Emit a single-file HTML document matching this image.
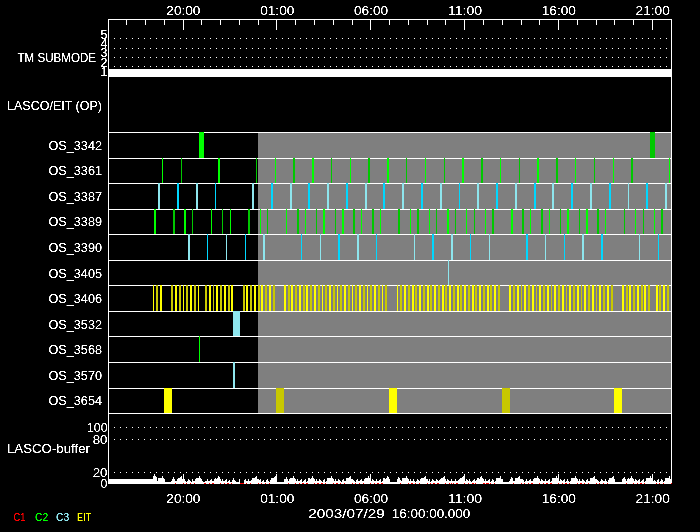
<!DOCTYPE html>
<html><head><meta charset="utf-8"><title>LASCO/EIT plan</title>
<style>html,body{margin:0;padding:0;background:#000;overflow:hidden}svg{display:block}text{font-family:"Liberation Sans",sans-serif}</style></head>
<body><svg width="700" height="532" viewBox="0 0 700 532">
<rect width="700" height="532" fill="#000"/>
<defs><filter id="tf" filterUnits="userSpaceOnUse" x="0" y="0" width="700" height="532" color-interpolation-filters="sRGB"><feComponentTransfer><feFuncA type="linear" slope="2.6" intercept="-0.6"/></feComponentTransfer></filter></defs>
<g shape-rendering="crispEdges">
<rect x="258" y="133" width="413" height="280" fill="#7f7f7f"/>
<rect x="108" y="132" width="564" height="1" fill="#fff"/>
<rect x="108" y="158" width="564" height="1" fill="#fff"/>
<rect x="108" y="183" width="564" height="1" fill="#fff"/>
<rect x="108" y="209" width="564" height="1" fill="#fff"/>
<rect x="108" y="234" width="564" height="1" fill="#fff"/>
<rect x="108" y="260" width="564" height="1" fill="#fff"/>
<rect x="108" y="285" width="564" height="1" fill="#fff"/>
<rect x="108" y="311" width="564" height="1" fill="#fff"/>
<rect x="108" y="336" width="564" height="1" fill="#fff"/>
<rect x="108" y="362" width="564" height="1" fill="#fff"/>
<rect x="108" y="388" width="564" height="1" fill="#fff"/>
<rect x="108" y="413" width="564" height="1" fill="#fff"/>
<rect x="199" y="132" width="5" height="26" fill="#00ff00"/>
<rect x="650" y="132" width="5" height="26" fill="#00c800"/>
<rect x="162" y="158" width="1" height="25" fill="#00ff00"/>
<rect x="181" y="158" width="1" height="25" fill="#00c800"/>
<rect x="218" y="158" width="2" height="25" fill="#00ff00"/>
<rect x="256" y="158" width="1" height="25" fill="#00c800"/>
<rect x="275" y="158" width="1" height="25" fill="#00ff00"/>
<rect x="293" y="158" width="2" height="25" fill="#00c800"/>
<rect x="312" y="158" width="2" height="25" fill="#00ff00"/>
<rect x="331" y="158" width="1" height="25" fill="#00c800"/>
<rect x="350" y="158" width="1" height="25" fill="#00ff00"/>
<rect x="368" y="158" width="2" height="25" fill="#00c800"/>
<rect x="387" y="158" width="2" height="25" fill="#00ff00"/>
<rect x="406" y="158" width="1" height="25" fill="#00c800"/>
<rect x="425" y="158" width="1" height="25" fill="#00ff00"/>
<rect x="444" y="158" width="1" height="25" fill="#00c800"/>
<rect x="462" y="158" width="2" height="25" fill="#00ff00"/>
<rect x="481" y="158" width="2" height="25" fill="#00c800"/>
<rect x="500" y="158" width="1" height="25" fill="#00ff00"/>
<rect x="519" y="158" width="1" height="25" fill="#00c800"/>
<rect x="537" y="158" width="2" height="25" fill="#00ff00"/>
<rect x="556" y="158" width="2" height="25" fill="#00c800"/>
<rect x="575" y="158" width="1" height="25" fill="#00ff00"/>
<rect x="594" y="158" width="1" height="25" fill="#00c800"/>
<rect x="613" y="158" width="1" height="25" fill="#00ff00"/>
<rect x="631" y="158" width="2" height="25" fill="#00c800"/>
<rect x="669" y="158" width="1" height="25" fill="#00ff00"/>
<rect x="158" y="183" width="2" height="26" fill="#8ee6ee"/>
<rect x="177" y="183" width="2" height="26" fill="#00d8ff"/>
<rect x="196" y="183" width="2" height="26" fill="#8ee6ee"/>
<rect x="215" y="183" width="1" height="26" fill="#00d8ff"/>
<rect x="252" y="183" width="2" height="26" fill="#8ee6ee"/>
<rect x="271" y="183" width="2" height="26" fill="#00d8ff"/>
<rect x="290" y="183" width="2" height="26" fill="#8ee6ee"/>
<rect x="308" y="183" width="2" height="26" fill="#00d8ff"/>
<rect x="327" y="183" width="2" height="26" fill="#8ee6ee"/>
<rect x="346" y="183" width="2" height="26" fill="#00d8ff"/>
<rect x="365" y="183" width="2" height="26" fill="#8ee6ee"/>
<rect x="383" y="183" width="2" height="26" fill="#00d8ff"/>
<rect x="402" y="183" width="2" height="26" fill="#8ee6ee"/>
<rect x="421" y="183" width="2" height="26" fill="#00d8ff"/>
<rect x="440" y="183" width="2" height="26" fill="#8ee6ee"/>
<rect x="459" y="183" width="1" height="26" fill="#00d8ff"/>
<rect x="477" y="183" width="2" height="26" fill="#8ee6ee"/>
<rect x="496" y="183" width="2" height="26" fill="#00d8ff"/>
<rect x="515" y="183" width="2" height="26" fill="#8ee6ee"/>
<rect x="534" y="183" width="2" height="26" fill="#00d8ff"/>
<rect x="552" y="183" width="2" height="26" fill="#8ee6ee"/>
<rect x="571" y="183" width="2" height="26" fill="#00d8ff"/>
<rect x="590" y="183" width="2" height="26" fill="#8ee6ee"/>
<rect x="609" y="183" width="2" height="26" fill="#00d8ff"/>
<rect x="628" y="183" width="1" height="26" fill="#8ee6ee"/>
<rect x="646" y="183" width="2" height="26" fill="#00d8ff"/>
<rect x="665" y="183" width="2" height="26" fill="#8ee6ee"/>
<rect x="154" y="209" width="2" height="25" fill="#00ff00"/>
<rect x="173" y="209" width="2" height="25" fill="#00c800"/>
<rect x="184" y="209" width="2" height="25" fill="#00ff00"/>
<rect x="192" y="209" width="1" height="25" fill="#00c800"/>
<rect x="211" y="209" width="1" height="25" fill="#00ff00"/>
<rect x="222" y="209" width="1" height="25" fill="#00c800"/>
<rect x="230" y="209" width="1" height="25" fill="#00ff00"/>
<rect x="248" y="209" width="2" height="25" fill="#00c800"/>
<rect x="260" y="209" width="1" height="25" fill="#00ff00"/>
<rect x="267" y="209" width="1" height="25" fill="#00c800"/>
<rect x="286" y="209" width="1" height="25" fill="#00ff00"/>
<rect x="297" y="209" width="2" height="25" fill="#00c800"/>
<rect x="305" y="209" width="1" height="25" fill="#00ff00"/>
<rect x="316" y="209" width="1" height="25" fill="#00c800"/>
<rect x="323" y="209" width="2" height="25" fill="#00ff00"/>
<rect x="335" y="209" width="1" height="25" fill="#00c800"/>
<rect x="342" y="209" width="2" height="25" fill="#00ff00"/>
<rect x="353" y="209" width="2" height="25" fill="#00c800"/>
<rect x="361" y="209" width="1" height="25" fill="#00ff00"/>
<rect x="372" y="209" width="2" height="25" fill="#00c800"/>
<rect x="380" y="209" width="1" height="25" fill="#00ff00"/>
<rect x="398" y="209" width="2" height="25" fill="#00c800"/>
<rect x="410" y="209" width="1" height="25" fill="#00ff00"/>
<rect x="417" y="209" width="2" height="25" fill="#00c800"/>
<rect x="429" y="209" width="1" height="25" fill="#00ff00"/>
<rect x="436" y="209" width="1" height="25" fill="#00c800"/>
<rect x="447" y="209" width="2" height="25" fill="#00ff00"/>
<rect x="455" y="209" width="1" height="25" fill="#00c800"/>
<rect x="466" y="209" width="1" height="25" fill="#00ff00"/>
<rect x="474" y="209" width="1" height="25" fill="#00c800"/>
<rect x="485" y="209" width="1" height="25" fill="#00ff00"/>
<rect x="492" y="209" width="2" height="25" fill="#00c800"/>
<rect x="511" y="209" width="2" height="25" fill="#00ff00"/>
<rect x="522" y="209" width="2" height="25" fill="#00c800"/>
<rect x="530" y="209" width="1" height="25" fill="#00ff00"/>
<rect x="541" y="209" width="2" height="25" fill="#00c800"/>
<rect x="549" y="209" width="1" height="25" fill="#00ff00"/>
<rect x="560" y="209" width="1" height="25" fill="#00c800"/>
<rect x="567" y="209" width="2" height="25" fill="#00ff00"/>
<rect x="579" y="209" width="1" height="25" fill="#00c800"/>
<rect x="586" y="209" width="2" height="25" fill="#00ff00"/>
<rect x="597" y="209" width="2" height="25" fill="#00c800"/>
<rect x="605" y="209" width="1" height="25" fill="#00ff00"/>
<rect x="624" y="209" width="1" height="25" fill="#00c800"/>
<rect x="635" y="209" width="1" height="25" fill="#00ff00"/>
<rect x="643" y="209" width="1" height="25" fill="#00c800"/>
<rect x="654" y="209" width="1" height="25" fill="#00ff00"/>
<rect x="661" y="209" width="2" height="25" fill="#00c800"/>
<rect x="188" y="234" width="2" height="26" fill="#8ee6ee"/>
<rect x="207" y="234" width="1" height="26" fill="#00d8ff"/>
<rect x="226" y="234" width="1" height="26" fill="#8ee6ee"/>
<rect x="245" y="234" width="1" height="26" fill="#00d8ff"/>
<rect x="263" y="234" width="2" height="26" fill="#8ee6ee"/>
<rect x="301" y="234" width="1" height="26" fill="#00d8ff"/>
<rect x="320" y="234" width="1" height="26" fill="#8ee6ee"/>
<rect x="338" y="234" width="2" height="26" fill="#00d8ff"/>
<rect x="357" y="234" width="2" height="26" fill="#8ee6ee"/>
<rect x="376" y="234" width="1" height="26" fill="#00d8ff"/>
<rect x="414" y="234" width="1" height="26" fill="#8ee6ee"/>
<rect x="432" y="234" width="2" height="26" fill="#00d8ff"/>
<rect x="451" y="234" width="2" height="26" fill="#8ee6ee"/>
<rect x="470" y="234" width="1" height="26" fill="#00d8ff"/>
<rect x="489" y="234" width="1" height="26" fill="#8ee6ee"/>
<rect x="526" y="234" width="2" height="26" fill="#00d8ff"/>
<rect x="545" y="234" width="1" height="26" fill="#8ee6ee"/>
<rect x="564" y="234" width="1" height="26" fill="#00d8ff"/>
<rect x="582" y="234" width="2" height="26" fill="#8ee6ee"/>
<rect x="601" y="234" width="2" height="26" fill="#00d8ff"/>
<rect x="639" y="234" width="1" height="26" fill="#8ee6ee"/>
<rect x="658" y="234" width="1" height="26" fill="#00d8ff"/>
<rect x="448" y="260" width="1" height="25" fill="#8ee6ee"/>
<rect x="153" y="285" width="1" height="26" fill="#ffff00"/>
<rect x="156" y="285" width="2" height="26" fill="#c8c800"/>
<rect x="160" y="285" width="2" height="26" fill="#ffff00"/>
<rect x="171" y="285" width="2" height="26" fill="#c8c800"/>
<rect x="175" y="285" width="2" height="26" fill="#ffff00"/>
<rect x="179" y="285" width="2" height="26" fill="#c8c800"/>
<rect x="183" y="285" width="1" height="26" fill="#ffff00"/>
<rect x="186" y="285" width="2" height="26" fill="#c8c800"/>
<rect x="190" y="285" width="2" height="26" fill="#ffff00"/>
<rect x="194" y="285" width="2" height="26" fill="#c8c800"/>
<rect x="198" y="285" width="1" height="26" fill="#ffff00"/>
<rect x="205" y="285" width="2" height="26" fill="#c8c800"/>
<rect x="209" y="285" width="2" height="26" fill="#ffff00"/>
<rect x="213" y="285" width="1" height="26" fill="#c8c800"/>
<rect x="216" y="285" width="2" height="26" fill="#ffff00"/>
<rect x="220" y="285" width="2" height="26" fill="#c8c800"/>
<rect x="224" y="285" width="2" height="26" fill="#ffff00"/>
<rect x="228" y="285" width="2" height="26" fill="#c8c800"/>
<rect x="231" y="285" width="2" height="26" fill="#ffff00"/>
<rect x="243" y="285" width="2" height="26" fill="#c8c800"/>
<rect x="246" y="285" width="2" height="26" fill="#ffff00"/>
<rect x="250" y="285" width="2" height="26" fill="#c8c800"/>
<rect x="254" y="285" width="2" height="26" fill="#ffff00"/>
<rect x="258" y="285" width="2" height="26" fill="#c8c800"/>
<rect x="261" y="285" width="2" height="26" fill="#ffff00"/>
<rect x="265" y="285" width="2" height="26" fill="#c8c800"/>
<rect x="269" y="285" width="2" height="26" fill="#ffff00"/>
<rect x="273" y="285" width="2" height="26" fill="#c8c800"/>
<rect x="284" y="285" width="2" height="26" fill="#ffff00"/>
<rect x="288" y="285" width="2" height="26" fill="#c8c800"/>
<rect x="291" y="285" width="2" height="26" fill="#ffff00"/>
<rect x="295" y="285" width="2" height="26" fill="#c8c800"/>
<rect x="299" y="285" width="2" height="26" fill="#ffff00"/>
<rect x="303" y="285" width="2" height="26" fill="#c8c800"/>
<rect x="306" y="285" width="2" height="26" fill="#ffff00"/>
<rect x="310" y="285" width="2" height="26" fill="#c8c800"/>
<rect x="314" y="285" width="2" height="26" fill="#ffff00"/>
<rect x="318" y="285" width="2" height="26" fill="#c8c800"/>
<rect x="322" y="285" width="1" height="26" fill="#ffff00"/>
<rect x="325" y="285" width="2" height="26" fill="#c8c800"/>
<rect x="329" y="285" width="2" height="26" fill="#ffff00"/>
<rect x="333" y="285" width="2" height="26" fill="#c8c800"/>
<rect x="337" y="285" width="1" height="26" fill="#ffff00"/>
<rect x="340" y="285" width="2" height="26" fill="#c8c800"/>
<rect x="344" y="285" width="2" height="26" fill="#ffff00"/>
<rect x="348" y="285" width="2" height="26" fill="#c8c800"/>
<rect x="352" y="285" width="1" height="26" fill="#ffff00"/>
<rect x="355" y="285" width="2" height="26" fill="#c8c800"/>
<rect x="359" y="285" width="2" height="26" fill="#ffff00"/>
<rect x="363" y="285" width="2" height="26" fill="#c8c800"/>
<rect x="367" y="285" width="1" height="26" fill="#ffff00"/>
<rect x="370" y="285" width="2" height="26" fill="#c8c800"/>
<rect x="374" y="285" width="2" height="26" fill="#ffff00"/>
<rect x="378" y="285" width="2" height="26" fill="#c8c800"/>
<rect x="382" y="285" width="1" height="26" fill="#ffff00"/>
<rect x="385" y="285" width="2" height="26" fill="#c8c800"/>
<rect x="397" y="285" width="1" height="26" fill="#ffff00"/>
<rect x="400" y="285" width="2" height="26" fill="#c8c800"/>
<rect x="404" y="285" width="2" height="26" fill="#ffff00"/>
<rect x="408" y="285" width="2" height="26" fill="#c8c800"/>
<rect x="412" y="285" width="2" height="26" fill="#ffff00"/>
<rect x="415" y="285" width="2" height="26" fill="#c8c800"/>
<rect x="419" y="285" width="2" height="26" fill="#ffff00"/>
<rect x="423" y="285" width="2" height="26" fill="#c8c800"/>
<rect x="427" y="285" width="2" height="26" fill="#ffff00"/>
<rect x="430" y="285" width="2" height="26" fill="#c8c800"/>
<rect x="434" y="285" width="2" height="26" fill="#ffff00"/>
<rect x="438" y="285" width="2" height="26" fill="#c8c800"/>
<rect x="442" y="285" width="2" height="26" fill="#ffff00"/>
<rect x="445" y="285" width="2" height="26" fill="#c8c800"/>
<rect x="449" y="285" width="2" height="26" fill="#ffff00"/>
<rect x="453" y="285" width="2" height="26" fill="#c8c800"/>
<rect x="457" y="285" width="2" height="26" fill="#ffff00"/>
<rect x="460" y="285" width="2" height="26" fill="#c8c800"/>
<rect x="464" y="285" width="2" height="26" fill="#ffff00"/>
<rect x="468" y="285" width="2" height="26" fill="#c8c800"/>
<rect x="472" y="285" width="2" height="26" fill="#ffff00"/>
<rect x="475" y="285" width="2" height="26" fill="#c8c800"/>
<rect x="479" y="285" width="2" height="26" fill="#ffff00"/>
<rect x="483" y="285" width="2" height="26" fill="#c8c800"/>
<rect x="487" y="285" width="2" height="26" fill="#ffff00"/>
<rect x="490" y="285" width="2" height="26" fill="#c8c800"/>
<rect x="494" y="285" width="2" height="26" fill="#ffff00"/>
<rect x="498" y="285" width="2" height="26" fill="#c8c800"/>
<rect x="509" y="285" width="2" height="26" fill="#ffff00"/>
<rect x="513" y="285" width="2" height="26" fill="#c8c800"/>
<rect x="517" y="285" width="2" height="26" fill="#ffff00"/>
<rect x="521" y="285" width="1" height="26" fill="#c8c800"/>
<rect x="524" y="285" width="2" height="26" fill="#ffff00"/>
<rect x="528" y="285" width="2" height="26" fill="#c8c800"/>
<rect x="532" y="285" width="2" height="26" fill="#ffff00"/>
<rect x="536" y="285" width="1" height="26" fill="#c8c800"/>
<rect x="539" y="285" width="2" height="26" fill="#ffff00"/>
<rect x="543" y="285" width="2" height="26" fill="#c8c800"/>
<rect x="547" y="285" width="2" height="26" fill="#ffff00"/>
<rect x="551" y="285" width="1" height="26" fill="#c8c800"/>
<rect x="554" y="285" width="2" height="26" fill="#ffff00"/>
<rect x="558" y="285" width="2" height="26" fill="#c8c800"/>
<rect x="562" y="285" width="2" height="26" fill="#ffff00"/>
<rect x="566" y="285" width="1" height="26" fill="#c8c800"/>
<rect x="569" y="285" width="2" height="26" fill="#ffff00"/>
<rect x="573" y="285" width="2" height="26" fill="#c8c800"/>
<rect x="577" y="285" width="2" height="26" fill="#ffff00"/>
<rect x="581" y="285" width="1" height="26" fill="#c8c800"/>
<rect x="584" y="285" width="2" height="26" fill="#ffff00"/>
<rect x="588" y="285" width="2" height="26" fill="#c8c800"/>
<rect x="592" y="285" width="2" height="26" fill="#ffff00"/>
<rect x="596" y="285" width="1" height="26" fill="#c8c800"/>
<rect x="599" y="285" width="2" height="26" fill="#ffff00"/>
<rect x="603" y="285" width="2" height="26" fill="#c8c800"/>
<rect x="607" y="285" width="2" height="26" fill="#ffff00"/>
<rect x="611" y="285" width="2" height="26" fill="#c8c800"/>
<rect x="622" y="285" width="2" height="26" fill="#ffff00"/>
<rect x="626" y="285" width="2" height="26" fill="#c8c800"/>
<rect x="629" y="285" width="2" height="26" fill="#ffff00"/>
<rect x="633" y="285" width="2" height="26" fill="#c8c800"/>
<rect x="637" y="285" width="2" height="26" fill="#ffff00"/>
<rect x="641" y="285" width="2" height="26" fill="#c8c800"/>
<rect x="644" y="285" width="2" height="26" fill="#ffff00"/>
<rect x="648" y="285" width="2" height="26" fill="#c8c800"/>
<rect x="656" y="285" width="2" height="26" fill="#ffff00"/>
<rect x="659" y="285" width="2" height="26" fill="#c8c800"/>
<rect x="663" y="285" width="2" height="26" fill="#ffff00"/>
<rect x="667" y="285" width="2" height="26" fill="#c8c800"/>
<rect x="233" y="311" width="7" height="25" fill="#8ee6ee"/>
<rect x="199" y="336" width="1" height="26" fill="#00ff00"/>
<rect x="233" y="362" width="2" height="26" fill="#8ee6ee"/>
<rect x="164" y="388" width="8" height="25" fill="#ffff00"/>
<rect x="276" y="388" width="8" height="25" fill="#c8c800"/>
<rect x="389" y="388" width="8" height="25" fill="#ffff00"/>
<rect x="502" y="388" width="8" height="25" fill="#c8c800"/>
<rect x="614" y="388" width="8" height="25" fill="#ffff00"/>
<rect x="108" y="69" width="564" height="8" fill="#fff"/>
<path d="M114 38.5H671" stroke="#fff" stroke-width="1" stroke-dasharray="1 5"/>
<path d="M114 48.5H671" stroke="#fff" stroke-width="1" stroke-dasharray="1 5"/>
<path d="M114 57.5H671" stroke="#fff" stroke-width="1" stroke-dasharray="1 5"/>
<path d="M114 66.5H671" stroke="#fff" stroke-width="1" stroke-dasharray="1 5"/>
<path d="M114 427.5H671" stroke="#fff" stroke-width="1" stroke-dasharray="1 5"/>
<path d="M114 439.5H671" stroke="#fff" stroke-width="1" stroke-dasharray="1 5"/>
<path d="M114 472.5H671" stroke="#fff" stroke-width="1" stroke-dasharray="1 5"/>
<path d="M109 484V479h1V479h1V479h1V479h1V479h1V479h1V479h1V479h1V479h1V479h1V479h1V479h1V479h1V479h1V479h1V479h1V479h1V479h1V479h1V479h1V479h1V479h1V479h1V479h1V479h1V479h1V479h1V479h1V479h1V479h1V479h1V479h1V479h1V479h1V479h1V479h1V479h1V479h1V479h1V479h1V479h1V479h1V479h1V479h1V476h1V474h1V476h1V477h1V481h1V478h1V478h1V478h1V478h1V476h1V478h1V479h1V482h1V482h1V482h1V482h1V482h1V482h1V481h1V479h1V477h1V479h1V481h1V481h1V479h1V478h1V478h1V477h1V476h1V479h1V474h1V479h1V481h1V482h1V481h1V479h1V480h1V481h1V482h1V479h1V481h1V481h1V479h1V478h1V478h1V478h1V476h1V478h1V480h1V481h1V482h1V482h1V481h1V481h1V479h1V481h1V481h1V480h1V479h1V481h1V481h1V479h1V478h1V479h1V478h1V476h1V477h1V480h1V481h1V479h1V481h1V481h1V480h1V479h1V482h1V481h1V480h1V482h1V482h1V480h1V478h1V480h1V481h1V482h1V482h1V482h1V479h1V483h1V483h1V483h1V483h1V480h1V479h1V481h1V481h1V479h1V481h1V481h1V480h1V478h1V478h1V478h1V477h1V476h1V479h1V481h1V480h1V479h1V482h1V481h1V480h1V482h1V482h1V480h1V479h1V481h1V482h1V480h1V478h1V478h1V478h1V477h1V476h1V474h1V482h1V482h1V482h1V482h1V482h1V482h1V482h1V479h1V479h1V477h1V479h1V481h1V479h1V478h1V478h1V478h1V476h1V478h1V481h1V481h1V479h1V481h1V481h1V480h1V479h1V482h1V481h1V480h1V479h1V482h1V481h1V478h1V478h1V479h1V478h1V476h1V478h1V480h1V481h1V479h1V481h1V481h1V479h1V480h1V481h1V482h1V480h1V479h1V482h1V481h1V478h1V478h1V478h1V478h1V476h1V478h1V480h1V481h1V479h1V481h1V481h1V479h1V480h1V481h1V482h1V480h1V479h1V481h1V481h1V478h1V478h1V478h1V477h1V476h1V479h1V479h1V480h1V481h1V482h1V480h1V479h1V481h1V481h1V480h1V479h1V481h1V481h1V479h1V478h1V478h1V478h1V476h1V478h1V474h1V481h1V479h1V480h1V481h1V481h1V479h1V481h1V481h1V480h1V479h1V482h1V481h1V478h1V478h1V479h1V478h1V476h1V477h1V479h1V482h1V482h1V482h1V482h1V482h1V482h1V482h1V479h1V477h1V478h1V480h1V481h1V478h1V478h1V478h1V478h1V476h1V478h1V480h1V481h1V479h1V481h1V481h1V479h1V481h1V482h1V481h1V479h1V480h1V481h1V479h1V478h1V478h1V478h1V477h1V476h1V479h1V480h1V481h1V479h1V482h1V481h1V479h1V480h1V481h1V481h1V479h1V480h1V481h1V480h1V479h1V478h1V478h1V477h1V476h1V479h1V481h1V479h1V480h1V481h1V481h1V479h1V481h1V481h1V481h1V479h1V481h1V481h1V480h1V479h1V478h1V478h1V477h1V476h1V474h1V481h1V479h1V480h1V481h1V479h1V481h1V482h1V481h1V480h1V479h1V481h1V480h1V478h1V478h1V479h1V477h1V476h1V478h1V479h1V481h1V479h1V481h1V481h1V480h1V479h1V482h1V481h1V479h1V480h1V482h1V481h1V478h1V478h1V478h1V478h1V476h1V479h1V479h1V482h1V482h1V482h1V482h1V482h1V482h1V481h1V479h1V477h1V478h1V481h1V481h1V478h1V478h1V478h1V477h1V476h1V479h1V480h1V479h1V480h1V482h1V481h1V479h1V481h1V481h1V480h1V479h1V481h1V481h1V479h1V478h1V478h1V478h1V476h1V478h1V481h1V481h1V479h1V480h1V481h1V481h1V479h1V481h1V481h1V480h1V479h1V482h1V481h1V478h1V478h1V478h1V478h1V476h1V478h1V474h1V481h1V479h1V480h1V481h1V480h1V479h1V482h1V481h1V479h1V481h1V482h1V481h1V478h1V478h1V478h1V478h1V476h1V478h1V480h1V481h1V479h1V481h1V481h1V479h1V480h1V481h1V482h1V480h1V479h1V481h1V481h1V478h1V478h1V478h1V477h1V476h1V479h1V481h1V480h1V481h1V482h1V481h1V479h1V480h1V481h1V481h1V479h1V481h1V482h1V480h1V478h1V478h1V478h1V477h1V476h1V479h1V482h1V482h1V482h1V482h1V482h1V482h1V482h1V479h1V478h1V477h1V479h1V481h1V479h1V478h1V479h1V478h1V476h1V478h1V481h1V481h1V479h1V480h1V481h1V480h1V479h1V482h1V481h1V480h1V479h1V482h1V481h1V478h1V478h1V478h1V478h1V476h1V478h1V474h1V481h1V480h1V481h1V482h1V480h1V479h1V482h1V481h1V479h1V480h1V482h1V481h1V478h1V478h1V478h1V478h1V476h1V479h1V484Z" fill="#fff"/>
<rect x="108" y="19" width="564" height="1" fill="#fff"/>
<rect x="108" y="483" width="564" height="1" fill="#fff"/>
<rect x="108" y="19" width="1" height="465" fill="#fff"/>
<rect x="671" y="19" width="1" height="465" fill="#fff"/>
<rect x="126" y="19" width="1" height="6" fill="#fff"/>
<rect x="126" y="479" width="1" height="5" fill="#fff"/>
<rect x="145" y="19" width="1" height="6" fill="#fff"/>
<rect x="145" y="479" width="1" height="5" fill="#fff"/>
<rect x="164" y="19" width="1" height="6" fill="#fff"/>
<rect x="164" y="479" width="1" height="5" fill="#fff"/>
<rect x="183" y="19" width="1" height="11" fill="#fff"/>
<rect x="183" y="474" width="1" height="10" fill="#fff"/>
<rect x="201" y="19" width="1" height="6" fill="#fff"/>
<rect x="201" y="479" width="1" height="5" fill="#fff"/>
<rect x="220" y="19" width="1" height="6" fill="#fff"/>
<rect x="220" y="479" width="1" height="5" fill="#fff"/>
<rect x="239" y="19" width="1" height="6" fill="#fff"/>
<rect x="239" y="479" width="1" height="5" fill="#fff"/>
<rect x="258" y="19" width="1" height="6" fill="#fff"/>
<rect x="258" y="479" width="1" height="5" fill="#fff"/>
<rect x="276" y="19" width="1" height="11" fill="#fff"/>
<rect x="276" y="474" width="1" height="10" fill="#fff"/>
<rect x="295" y="19" width="1" height="6" fill="#fff"/>
<rect x="295" y="479" width="1" height="5" fill="#fff"/>
<rect x="314" y="19" width="1" height="6" fill="#fff"/>
<rect x="314" y="479" width="1" height="5" fill="#fff"/>
<rect x="333" y="19" width="1" height="6" fill="#fff"/>
<rect x="333" y="479" width="1" height="5" fill="#fff"/>
<rect x="352" y="19" width="1" height="6" fill="#fff"/>
<rect x="352" y="479" width="1" height="5" fill="#fff"/>
<rect x="370" y="19" width="1" height="11" fill="#fff"/>
<rect x="370" y="474" width="1" height="10" fill="#fff"/>
<rect x="389" y="19" width="1" height="6" fill="#fff"/>
<rect x="389" y="479" width="1" height="5" fill="#fff"/>
<rect x="408" y="19" width="1" height="6" fill="#fff"/>
<rect x="408" y="479" width="1" height="5" fill="#fff"/>
<rect x="427" y="19" width="1" height="6" fill="#fff"/>
<rect x="427" y="479" width="1" height="5" fill="#fff"/>
<rect x="445" y="19" width="1" height="6" fill="#fff"/>
<rect x="445" y="479" width="1" height="5" fill="#fff"/>
<rect x="464" y="19" width="1" height="11" fill="#fff"/>
<rect x="464" y="474" width="1" height="10" fill="#fff"/>
<rect x="483" y="19" width="1" height="6" fill="#fff"/>
<rect x="483" y="479" width="1" height="5" fill="#fff"/>
<rect x="502" y="19" width="1" height="6" fill="#fff"/>
<rect x="502" y="479" width="1" height="5" fill="#fff"/>
<rect x="521" y="19" width="1" height="6" fill="#fff"/>
<rect x="521" y="479" width="1" height="5" fill="#fff"/>
<rect x="539" y="19" width="1" height="6" fill="#fff"/>
<rect x="539" y="479" width="1" height="5" fill="#fff"/>
<rect x="558" y="19" width="1" height="11" fill="#fff"/>
<rect x="558" y="474" width="1" height="10" fill="#fff"/>
<rect x="577" y="19" width="1" height="6" fill="#fff"/>
<rect x="577" y="479" width="1" height="5" fill="#fff"/>
<rect x="596" y="19" width="1" height="6" fill="#fff"/>
<rect x="596" y="479" width="1" height="5" fill="#fff"/>
<rect x="614" y="19" width="1" height="6" fill="#fff"/>
<rect x="614" y="479" width="1" height="5" fill="#fff"/>
<rect x="633" y="19" width="1" height="6" fill="#fff"/>
<rect x="633" y="479" width="1" height="5" fill="#fff"/>
<rect x="652" y="19" width="1" height="11" fill="#fff"/>
<rect x="652" y="474" width="1" height="10" fill="#fff"/>
<rect x="175" y="483" width="1" height="1" fill="#ff0000"/>
<rect x="183" y="483" width="1" height="1" fill="#ff0000"/>
<rect x="186" y="483" width="1" height="1" fill="#ff0000"/>
<rect x="190" y="483" width="1" height="1" fill="#ff0000"/>
<rect x="194" y="483" width="1" height="1" fill="#ff0000"/>
<rect x="204" y="483" width="1" height="1" fill="#ff0000"/>
<rect x="205" y="483" width="1" height="1" fill="#ff0000"/>
<rect x="209" y="483" width="1" height="1" fill="#ff0000"/>
<rect x="212" y="483" width="1" height="1" fill="#ff0000"/>
<rect x="213" y="483" width="1" height="1" fill="#ff0000"/>
<rect x="220" y="483" width="1" height="1" fill="#ff0000"/>
<rect x="224" y="483" width="1" height="1" fill="#ff0000"/>
<rect x="227" y="483" width="1" height="1" fill="#ff0000"/>
<rect x="228" y="483" width="1" height="1" fill="#ff0000"/>
<rect x="231" y="483" width="1" height="1" fill="#ff0000"/>
<rect x="240" y="483" width="1" height="1" fill="#ff0000"/>
<rect x="241" y="483" width="1" height="1" fill="#ff0000"/>
<rect x="242" y="483" width="1" height="1" fill="#ff0000"/>
<rect x="243" y="483" width="1" height="1" fill="#ff0000"/>
<rect x="246" y="483" width="1" height="1" fill="#ff0000"/>
<rect x="250" y="483" width="1" height="1" fill="#ff0000"/>
<rect x="258" y="483" width="1" height="1" fill="#ff0000"/>
<rect x="261" y="483" width="1" height="1" fill="#ff0000"/>
<rect x="265" y="483" width="1" height="1" fill="#ff0000"/>
<rect x="269" y="483" width="1" height="1" fill="#ff0000"/>
<rect x="288" y="483" width="1" height="1" fill="#ff0000"/>
<rect x="295" y="483" width="1" height="1" fill="#ff0000"/>
<rect x="299" y="483" width="1" height="1" fill="#ff0000"/>
<rect x="302" y="483" width="1" height="1" fill="#ff0000"/>
<rect x="303" y="483" width="1" height="1" fill="#ff0000"/>
<rect x="306" y="483" width="1" height="1" fill="#ff0000"/>
<rect x="307" y="483" width="1" height="1" fill="#ff0000"/>
<rect x="314" y="483" width="1" height="1" fill="#ff0000"/>
<rect x="317" y="483" width="1" height="1" fill="#ff0000"/>
<rect x="318" y="483" width="1" height="1" fill="#ff0000"/>
<rect x="321" y="483" width="1" height="1" fill="#ff0000"/>
<rect x="322" y="483" width="1" height="1" fill="#ff0000"/>
<rect x="325" y="483" width="1" height="1" fill="#ff0000"/>
<rect x="333" y="483" width="1" height="1" fill="#ff0000"/>
<rect x="336" y="483" width="1" height="1" fill="#ff0000"/>
<rect x="337" y="483" width="1" height="1" fill="#ff0000"/>
<rect x="340" y="483" width="1" height="1" fill="#ff0000"/>
<rect x="344" y="483" width="1" height="1" fill="#ff0000"/>
<rect x="352" y="483" width="1" height="1" fill="#ff0000"/>
<rect x="355" y="483" width="1" height="1" fill="#ff0000"/>
<rect x="359" y="483" width="1" height="1" fill="#ff0000"/>
<rect x="363" y="483" width="1" height="1" fill="#ff0000"/>
<rect x="370" y="483" width="1" height="1" fill="#ff0000"/>
<rect x="374" y="483" width="1" height="1" fill="#ff0000"/>
<rect x="377" y="483" width="1" height="1" fill="#ff0000"/>
<rect x="378" y="483" width="1" height="1" fill="#ff0000"/>
<rect x="381" y="483" width="1" height="1" fill="#ff0000"/>
<rect x="382" y="483" width="1" height="1" fill="#ff0000"/>
<rect x="400" y="483" width="1" height="1" fill="#ff0000"/>
<rect x="408" y="483" width="1" height="1" fill="#ff0000"/>
<rect x="411" y="483" width="1" height="1" fill="#ff0000"/>
<rect x="412" y="483" width="1" height="1" fill="#ff0000"/>
<rect x="415" y="483" width="1" height="1" fill="#ff0000"/>
<rect x="419" y="483" width="1" height="1" fill="#ff0000"/>
<rect x="427" y="483" width="1" height="1" fill="#ff0000"/>
<rect x="430" y="483" width="1" height="1" fill="#ff0000"/>
<rect x="433" y="483" width="1" height="1" fill="#ff0000"/>
<rect x="434" y="483" width="1" height="1" fill="#ff0000"/>
<rect x="437" y="483" width="1" height="1" fill="#ff0000"/>
<rect x="438" y="483" width="1" height="1" fill="#ff0000"/>
<rect x="445" y="483" width="1" height="1" fill="#ff0000"/>
<rect x="449" y="483" width="1" height="1" fill="#ff0000"/>
<rect x="451" y="483" width="1" height="1" fill="#ff0000"/>
<rect x="453" y="483" width="1" height="1" fill="#ff0000"/>
<rect x="456" y="483" width="1" height="1" fill="#ff0000"/>
<rect x="457" y="483" width="1" height="1" fill="#ff0000"/>
<rect x="464" y="483" width="1" height="1" fill="#ff0000"/>
<rect x="468" y="483" width="1" height="1" fill="#ff0000"/>
<rect x="472" y="483" width="1" height="1" fill="#ff0000"/>
<rect x="473" y="483" width="1" height="1" fill="#ff0000"/>
<rect x="475" y="483" width="1" height="1" fill="#ff0000"/>
<rect x="483" y="483" width="1" height="1" fill="#ff0000"/>
<rect x="484" y="483" width="1" height="1" fill="#ff0000"/>
<rect x="487" y="483" width="1" height="1" fill="#ff0000"/>
<rect x="488" y="483" width="1" height="1" fill="#ff0000"/>
<rect x="486" y="483" width="1" height="1" fill="#ff0000"/>
<rect x="490" y="483" width="1" height="1" fill="#ff0000"/>
<rect x="494" y="483" width="1" height="1" fill="#ff0000"/>
<rect x="513" y="483" width="1" height="1" fill="#ff0000"/>
<rect x="521" y="483" width="1" height="1" fill="#ff0000"/>
<rect x="524" y="483" width="1" height="1" fill="#ff0000"/>
<rect x="528" y="483" width="1" height="1" fill="#ff0000"/>
<rect x="531" y="483" width="1" height="1" fill="#ff0000"/>
<rect x="532" y="483" width="1" height="1" fill="#ff0000"/>
<rect x="539" y="483" width="1" height="1" fill="#ff0000"/>
<rect x="543" y="483" width="1" height="1" fill="#ff0000"/>
<rect x="546" y="483" width="1" height="1" fill="#ff0000"/>
<rect x="547" y="483" width="1" height="1" fill="#ff0000"/>
<rect x="550" y="483" width="1" height="1" fill="#ff0000"/>
<rect x="551" y="483" width="1" height="1" fill="#ff0000"/>
<rect x="558" y="483" width="1" height="1" fill="#ff0000"/>
<rect x="562" y="483" width="1" height="1" fill="#ff0000"/>
<rect x="565" y="483" width="1" height="1" fill="#ff0000"/>
<rect x="566" y="483" width="1" height="1" fill="#ff0000"/>
<rect x="569" y="483" width="1" height="1" fill="#ff0000"/>
<rect x="577" y="483" width="1" height="1" fill="#ff0000"/>
<rect x="580" y="483" width="1" height="1" fill="#ff0000"/>
<rect x="581" y="483" width="1" height="1" fill="#ff0000"/>
<rect x="584" y="483" width="1" height="1" fill="#ff0000"/>
<rect x="588" y="483" width="1" height="1" fill="#ff0000"/>
<rect x="596" y="483" width="1" height="1" fill="#ff0000"/>
<rect x="599" y="483" width="1" height="1" fill="#ff0000"/>
<rect x="603" y="483" width="1" height="1" fill="#ff0000"/>
<rect x="607" y="483" width="1" height="1" fill="#ff0000"/>
<rect x="626" y="483" width="1" height="1" fill="#ff0000"/>
<rect x="633" y="483" width="1" height="1" fill="#ff0000"/>
<rect x="637" y="483" width="1" height="1" fill="#ff0000"/>
<rect x="640" y="483" width="1" height="1" fill="#ff0000"/>
<rect x="641" y="483" width="1" height="1" fill="#ff0000"/>
<rect x="644" y="483" width="1" height="1" fill="#ff0000"/>
<rect x="656" y="483" width="1" height="1" fill="#ff0000"/>
<rect x="659" y="483" width="1" height="1" fill="#ff0000"/>
<rect x="663" y="483" width="1" height="1" fill="#ff0000"/>
<rect x="671" y="483" width="1" height="1" fill="#ff0000"/>
</g>
<g filter="url(#tf)">
<text x="183.39333333333335" y="15" text-anchor="middle" font-size="12.4" fill="#fff" textLength="34.2" lengthAdjust="spacingAndGlyphs">20:00</text>
<text x="183.39333333333335" y="502.5" text-anchor="middle" font-size="12.4" fill="#fff" textLength="34.2" lengthAdjust="spacingAndGlyphs">20:00</text>
<text x="277.26000000000005" y="15" text-anchor="middle" font-size="12.4" fill="#fff" textLength="34.2" lengthAdjust="spacingAndGlyphs">01:00</text>
<text x="277.26000000000005" y="502.5" text-anchor="middle" font-size="12.4" fill="#fff" textLength="34.2" lengthAdjust="spacingAndGlyphs">01:00</text>
<text x="371.12666666666667" y="15" text-anchor="middle" font-size="12.4" fill="#fff" textLength="34.2" lengthAdjust="spacingAndGlyphs">06:00</text>
<text x="371.12666666666667" y="502.5" text-anchor="middle" font-size="12.4" fill="#fff" textLength="34.2" lengthAdjust="spacingAndGlyphs">06:00</text>
<text x="464.99333333333334" y="15" text-anchor="middle" font-size="12.4" fill="#fff" textLength="34.2" lengthAdjust="spacingAndGlyphs">11:00</text>
<text x="464.99333333333334" y="502.5" text-anchor="middle" font-size="12.4" fill="#fff" textLength="34.2" lengthAdjust="spacingAndGlyphs">11:00</text>
<text x="558.8599999999999" y="15" text-anchor="middle" font-size="12.4" fill="#fff" textLength="34.2" lengthAdjust="spacingAndGlyphs">16:00</text>
<text x="558.8599999999999" y="502.5" text-anchor="middle" font-size="12.4" fill="#fff" textLength="34.2" lengthAdjust="spacingAndGlyphs">16:00</text>
<text x="652.7266666666666" y="15" text-anchor="middle" font-size="12.4" fill="#fff" textLength="34.2" lengthAdjust="spacingAndGlyphs">21:00</text>
<text x="652.7266666666666" y="502.5" text-anchor="middle" font-size="12.4" fill="#fff" textLength="34.2" lengthAdjust="spacingAndGlyphs">21:00</text>
<text x="96" y="62" text-anchor="end" font-size="12.4" fill="#fff" textLength="78.5" lengthAdjust="spacingAndGlyphs">TM SUBMODE</text>
<text x="102" y="109.5" text-anchor="end" font-size="12.4" fill="#fff" textLength="95" lengthAdjust="spacingAndGlyphs">LASCO/EIT (OP)</text>
<text x="102" y="150" text-anchor="end" font-size="12.4" fill="#fff" textLength="53.5" lengthAdjust="spacingAndGlyphs">OS_3342</text>
<text x="102" y="175" text-anchor="end" font-size="12.4" fill="#fff" textLength="53.5" lengthAdjust="spacingAndGlyphs">OS_3361</text>
<text x="102" y="201" text-anchor="end" font-size="12.4" fill="#fff" textLength="53.5" lengthAdjust="spacingAndGlyphs">OS_3387</text>
<text x="102" y="226" text-anchor="end" font-size="12.4" fill="#fff" textLength="53.5" lengthAdjust="spacingAndGlyphs">OS_3389</text>
<text x="102" y="252" text-anchor="end" font-size="12.4" fill="#fff" textLength="53.5" lengthAdjust="spacingAndGlyphs">OS_3390</text>
<text x="102" y="278" text-anchor="end" font-size="12.4" fill="#fff" textLength="53.5" lengthAdjust="spacingAndGlyphs">OS_3405</text>
<text x="102" y="303" text-anchor="end" font-size="12.4" fill="#fff" textLength="53.5" lengthAdjust="spacingAndGlyphs">OS_3406</text>
<text x="102" y="329" text-anchor="end" font-size="12.4" fill="#fff" textLength="53.5" lengthAdjust="spacingAndGlyphs">OS_3532</text>
<text x="102" y="354" text-anchor="end" font-size="12.4" fill="#fff" textLength="53.5" lengthAdjust="spacingAndGlyphs">OS_3568</text>
<text x="102" y="380" text-anchor="end" font-size="12.4" fill="#fff" textLength="53.5" lengthAdjust="spacingAndGlyphs">OS_3570</text>
<text x="102" y="405" text-anchor="end" font-size="12.4" fill="#fff" textLength="53.5" lengthAdjust="spacingAndGlyphs">OS_3654</text>
<text x="90" y="453" text-anchor="end" font-size="12.4" fill="#fff" textLength="83" lengthAdjust="spacingAndGlyphs">LASCO-buffer</text>
<text x="107.3" y="39" text-anchor="end" font-size="12.4" fill="#fff">5</text>
<text x="107.3" y="48" text-anchor="end" font-size="12.4" fill="#fff">4</text>
<text x="107.3" y="57" text-anchor="end" font-size="12.4" fill="#fff">3</text>
<text x="107.3" y="66.5" text-anchor="end" font-size="12.4" fill="#fff">2</text>
<text x="107.3" y="75.5" text-anchor="end" font-size="12.4" fill="#fff">1</text>
<text x="107.5" y="432" text-anchor="end" font-size="12.4" fill="#fff" textLength="20.5" lengthAdjust="spacingAndGlyphs">100</text>
<text x="107.5" y="444" text-anchor="end" font-size="12.4" fill="#fff" textLength="14.8" lengthAdjust="spacingAndGlyphs">80</text>
<text x="107.5" y="477" text-anchor="end" font-size="12.4" fill="#fff" textLength="14.8" lengthAdjust="spacingAndGlyphs">20</text>
<text x="107.5" y="488" text-anchor="end" font-size="12.4" fill="#fff">0</text>
<text y="518" font-size="12.4" fill="#fff"><tspan x="308.2" textLength="76.5" lengthAdjust="spacingAndGlyphs">2003/07/29</tspan> <tspan x="391.8" textLength="78.5" lengthAdjust="spacingAndGlyphs">16:00:00.000</tspan></text>
<text x="13.5" y="520.5" text-anchor="start" font-size="10.5" fill="#ff0000" textLength="12" lengthAdjust="spacingAndGlyphs">C1</text>
<text x="35" y="520.5" text-anchor="start" font-size="10.5" fill="#00ff00" textLength="13.2" lengthAdjust="spacingAndGlyphs">C2</text>
<text x="56" y="520.5" text-anchor="start" font-size="10.5" fill="#8ee6ee" textLength="13.2" lengthAdjust="spacingAndGlyphs">C3</text>
<text x="77" y="520.5" text-anchor="start" font-size="10.5" fill="#ffff00" textLength="14" lengthAdjust="spacingAndGlyphs">EIT</text>
</g>
</svg></body></html>
